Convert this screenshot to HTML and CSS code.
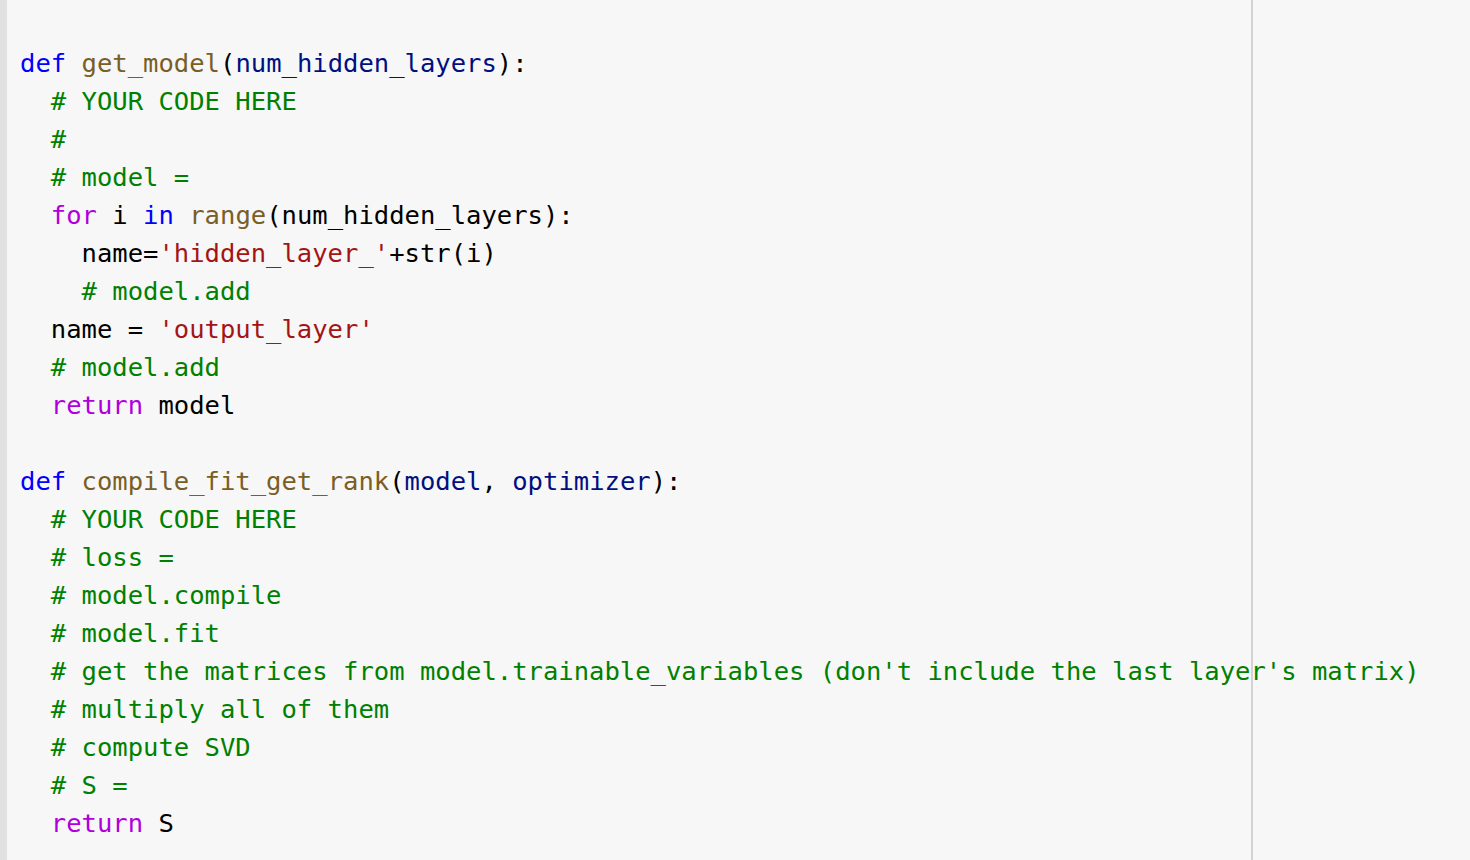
FILE: index.html
```html
<!DOCTYPE html>
<html>
<head>
<meta charset="utf-8">
<link rel="stylesheet" href="styles.css">
</head>
<body>
<div class="editor">
  <div class="gutter"></div>
  <div class="code-area">
    <div class="ruler"></div>
<pre class="code"><span class="kw">def</span> <span class="fn">get_model</span>(<span class="pr">num_hidden_layers</span>):
  <span class="cm"># YOUR CODE HERE</span>
  <span class="cm">#</span>
  <span class="cm"># model =</span>
  <span class="ctl">for</span> i <span class="kw">in</span> <span class="fn">range</span>(num_hidden_layers):
    name=<span class="st">'hidden_layer_'</span>+str(i)
    <span class="cm"># model.add</span>
  name = <span class="st">'output_layer'</span>
  <span class="cm"># model.add</span>
  <span class="ctl">return</span> model

<span class="kw">def</span> <span class="fn">compile_fit_get_rank</span>(<span class="pr">model</span>, <span class="pr">optimizer</span>):
  <span class="cm"># YOUR CODE HERE</span>
  <span class="cm"># loss =</span>
  <span class="cm"># model.compile</span>
  <span class="cm"># model.fit</span>
  <span class="cm"># get the matrices from model.trainable_variables (don't include the last layer's matrix)</span>
  <span class="cm"># multiply all of them</span>
  <span class="cm"># compute SVD</span>
  <span class="cm"># S =</span>
  <span class="ctl">return</span> S
</pre>
  </div>
</div>
</body>
</html>
```
FILE: styles.css
```css
html, body {
  margin: 0;
  padding: 0;
  background: #f7f7f7;
  overflow: hidden;
}
.editor {
  display: flex;
  width: 1470px;
  height: 860px;
  overflow: hidden;
}
.gutter {
  width: 7px;
  flex: 0 0 7px;
  background: #e1e1e1;
}
.code-area {
  position: relative;
  flex: 1;
  padding: 44px 0 0 13px;
}
.ruler {
  position: absolute;
  top: 0;
  bottom: 0;
  left: 1244px;
  width: 2px;
  background: #d3d3d3;
  z-index: 2;
}
.code {
  margin: 0;
  font-family: "DejaVu Sans Mono", "Liberation Mono", monospace;
  font-size: 25.55px;
  line-height: 38px;
  color: #000000;
  white-space: pre;
}
.kw { color: #0000ff; }
.fn { color: #795e26; }
.pr { color: #001080; }
.cm { color: #008000; }
.st { color: #a31515; }
.ctl { color: #af00db; }
```
